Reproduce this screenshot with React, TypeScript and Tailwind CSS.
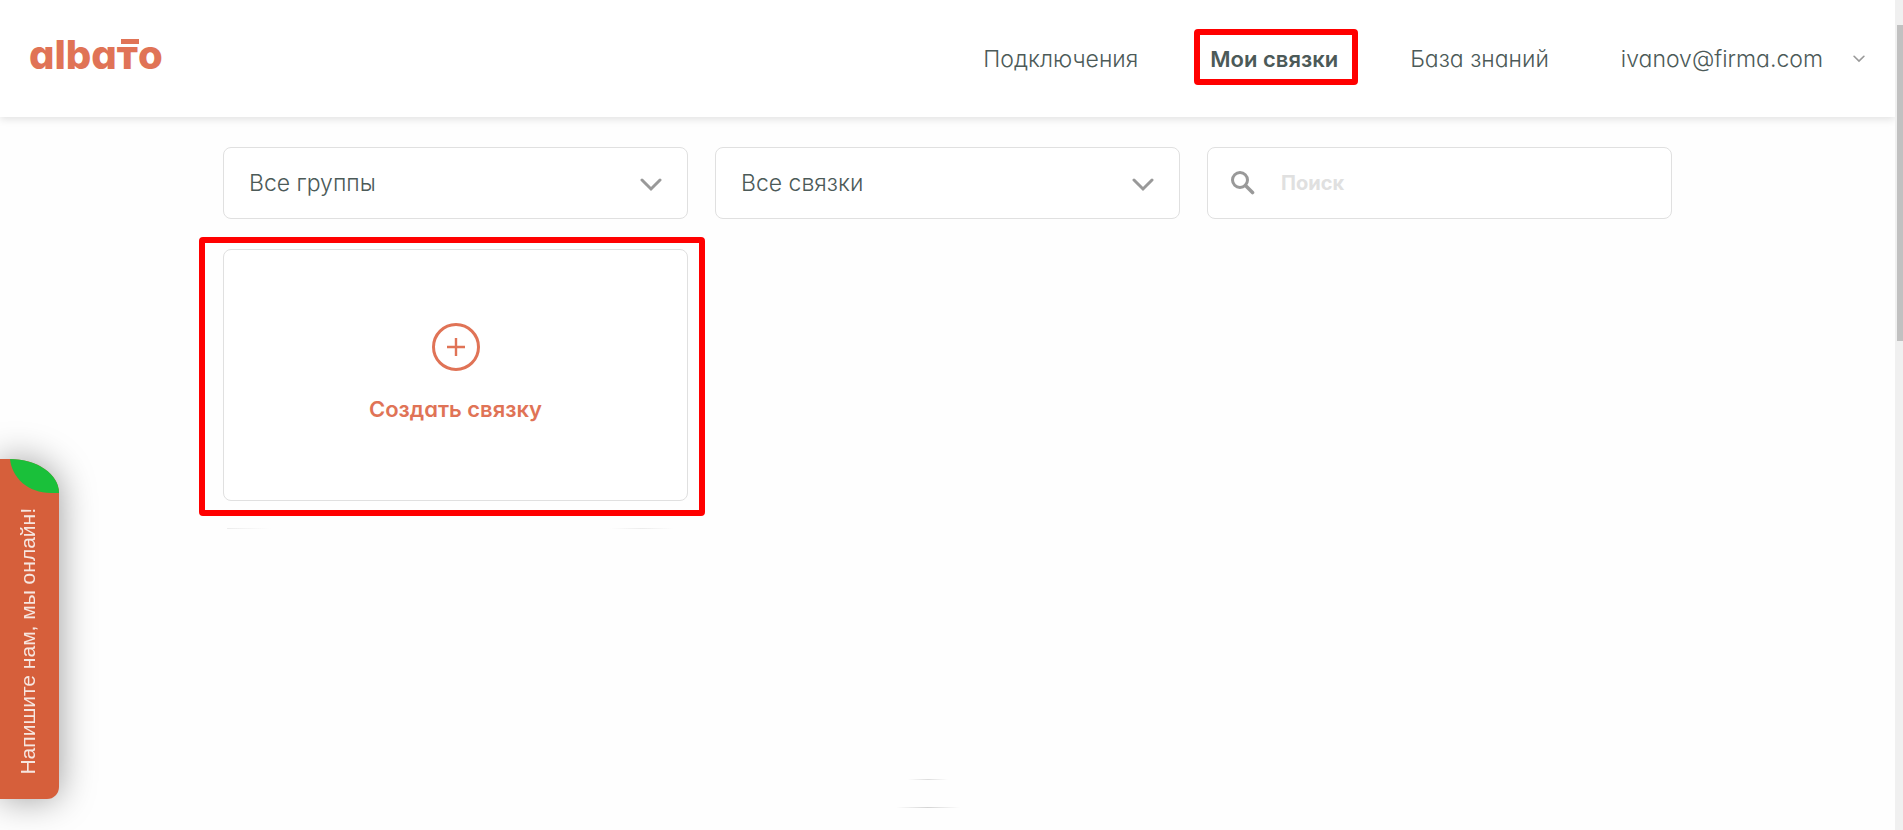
import React, { useState } from 'react';

interface NavItem {
  label: string;
  href: string;
  active?: boolean;
}

const navItems: NavItem[] = [
  { label: 'Подключения', href: '#connections' },
  { label: 'Мои связки', href: '#bundles', active: true },
  { label: 'База знаний', href: '#knowledge' },
];

const Logo: React.FC = () => (
  <svg width="150" height="40" viewBox="0 0 150 40" role="img" aria-label="albato" className="overflow-visible">
    <text x="-1" y="35" fill="#e07356" fontSize="40" className="font-extrabold">
      albaтo
    </text>
    <rect x="91" y="5" width="18" height="5" fill="#e07356" />
  </svg>
);

const Chevron: React.FC<{ className: string; strokeWidth: number }> = ({ className, strokeWidth }) => (
  <svg className={className} viewBox="0 0 22 14" fill="none" stroke="#999999" strokeWidth={strokeWidth} strokeLinecap="round" aria-hidden="true">
    <path d="M2 2l9 9 9-9" />
  </svg>
);

const Header: React.FC = () => (
  <header className="flex h-[117px] items-center justify-between bg-white px-[30px] shadow-[0_2px_8px_rgba(0,0,0,0.12)]">
    <a href="#home" className="-mt-2.5">
      <Logo />
    </a>
    <nav className="flex items-center gap-[72px] text-[23px] leading-7">
      {navItems.map((item) => (
        <a
          key={item.label}
          href={item.href}
          className={item.active ? 'relative text-[22px] font-semibold' : 'font-light'}
        >
          {item.label}
          {item.active && (
            <span className="pointer-events-none absolute -bottom-3 -left-4 -right-5 -top-4 rounded-sm border-[6px] border-[#ff0000]" />
          )}
        </a>
      ))}
      <button type="button" className="flex items-center gap-[30px] font-light">
        ivanov@firma.com
        <Chevron className="h-[8px] w-[12px]" strokeWidth={3} />
      </button>
    </nav>
  </header>
);

const FilterSelect: React.FC<{ label: string; option: string }> = ({ label, option }) => (
  <div className="relative">
    <select
      aria-label={label}
      className="h-[72px] w-full appearance-none rounded-lg border border-[#e0e0e0] bg-white pl-[25px] pr-16 text-[23px] font-light"
    >
      <option>{option}</option>
    </select>
    <Chevron className="pointer-events-none absolute right-[26px] top-[31px] h-[14px] w-[22px]" strokeWidth={3} />
  </div>
);

const SearchBox: React.FC = () => {
  const [query, setQuery] = useState<string>('');

  return (
    <label className="flex h-[72px] items-center gap-[26px] rounded-lg border border-[#e0e0e0] bg-white px-[23px]">
      <svg className="h-6 w-6 shrink-0" viewBox="0 0 24 24" fill="none" stroke="#999999" aria-hidden="true">
        <circle cx="9" cy="9" r="7.5" strokeWidth="3" />
        <path d="M14.5 14.5l7 7" strokeWidth="3.6" strokeLinecap="round" />
      </svg>
      <input
        type="text"
        aria-label="Поиск"
        placeholder="Поиск"
        value={query}
        onChange={(e) => setQuery(e.target.value)}
        className="min-w-0 flex-1 text-xl font-bold outline-none placeholder:text-[#e0e0e0]"
      />
    </label>
  );
};

const CreateCard: React.FC = () => (
  <div className="relative">
    <button
      type="button"
      className="flex h-[252px] w-full flex-col items-center gap-6 rounded-lg border border-[#e0e0e0] bg-white pt-[73px] text-[22px] font-semibold leading-7 text-[#e07356]"
    >
      <svg className="h-12 w-12" viewBox="0 0 48 48" fill="none" stroke="#e07356" aria-hidden="true">
        <circle cx="24" cy="24" r="22.5" strokeWidth="3" />
        <path d="M24 15v18M15 24h18" strokeWidth="2.4" />
      </svg>
      Создать связку
    </button>
    <span className="pointer-events-none absolute -bottom-[15px] -left-6 -right-[17px] -top-3 rounded-sm border-[6px] border-[#ff0000]" />
  </div>
);

const FadedEdges: React.FC = () => (
  <div className="mx-auto max-w-[1449px] pt-[27px]">
    <div className="flex w-1/3 justify-between pl-1 pr-8">
      <div className="h-px w-11 bg-linear-to-r from-[#ececec] to-transparent" />
      <div className="h-px w-16 bg-linear-to-r from-transparent via-[#ececec] to-transparent" />
    </div>
    <div className="flex flex-col items-center gap-[27px] pr-10 pt-[250px]">
      <div className="h-px w-10 bg-linear-to-r from-transparent via-[#dddddd] to-transparent" />
      <div className="h-px w-16 bg-linear-to-r from-transparent via-[#d4d4d4] to-transparent" />
    </div>
  </div>
);

const ChatTab: React.FC = () => (
  <button
    type="button"
    className="fixed left-0 top-[459px] flex h-[340px] w-[59px] items-end justify-center rounded-br-xl rounded-tr-[49px_34px] bg-[#d65f3b] pb-6 pr-1 shadow-[0_0_36px_rgba(0,0,0,0.4)]"
  >
    <svg className="absolute right-0 top-0 h-[34px] w-[49px]" viewBox="0 0 49 34" aria-hidden="true">
      <path d="M0 0C27 0 49 15 49 34H41C18 34 2 19 0 0z" fill="#1ac03a" />
    </svg>
    <span className="rotate-180 whitespace-nowrap font-['Liberation_Sans',sans-serif] text-[21px] leading-6 text-[#f6e6e0] [writing-mode:vertical-rl]">
      Напишите нам, мы онлайн!
    </span>
  </button>
);

const App: React.FC = () => {
  return (
    <div className="flex min-h-screen bg-[#fefefe] font-['Inter',sans-serif] text-[#4c5a58] [font-feature-settings:'cv11']">
      <div className="min-w-0 flex-1">
        <Header />
        <main className="mx-auto grid max-w-[1449px] grid-cols-3 gap-x-[27px] gap-y-[30px] pt-[30px]">
          <FilterSelect label="Группы" option="Все группы" />
          <FilterSelect label="Связки" option="Все связки" />
          <SearchBox />
          <CreateCard />
        </main>
        <FadedEdges />
      </div>
      <div className="w-2 shrink-0 bg-[#f0f0f0] pl-[2px] pt-[25px]">
        <div className="h-[316px] bg-[#c1c1c1]" />
      </div>
      <ChatTab />
    </div>
  );
};

export default App;
